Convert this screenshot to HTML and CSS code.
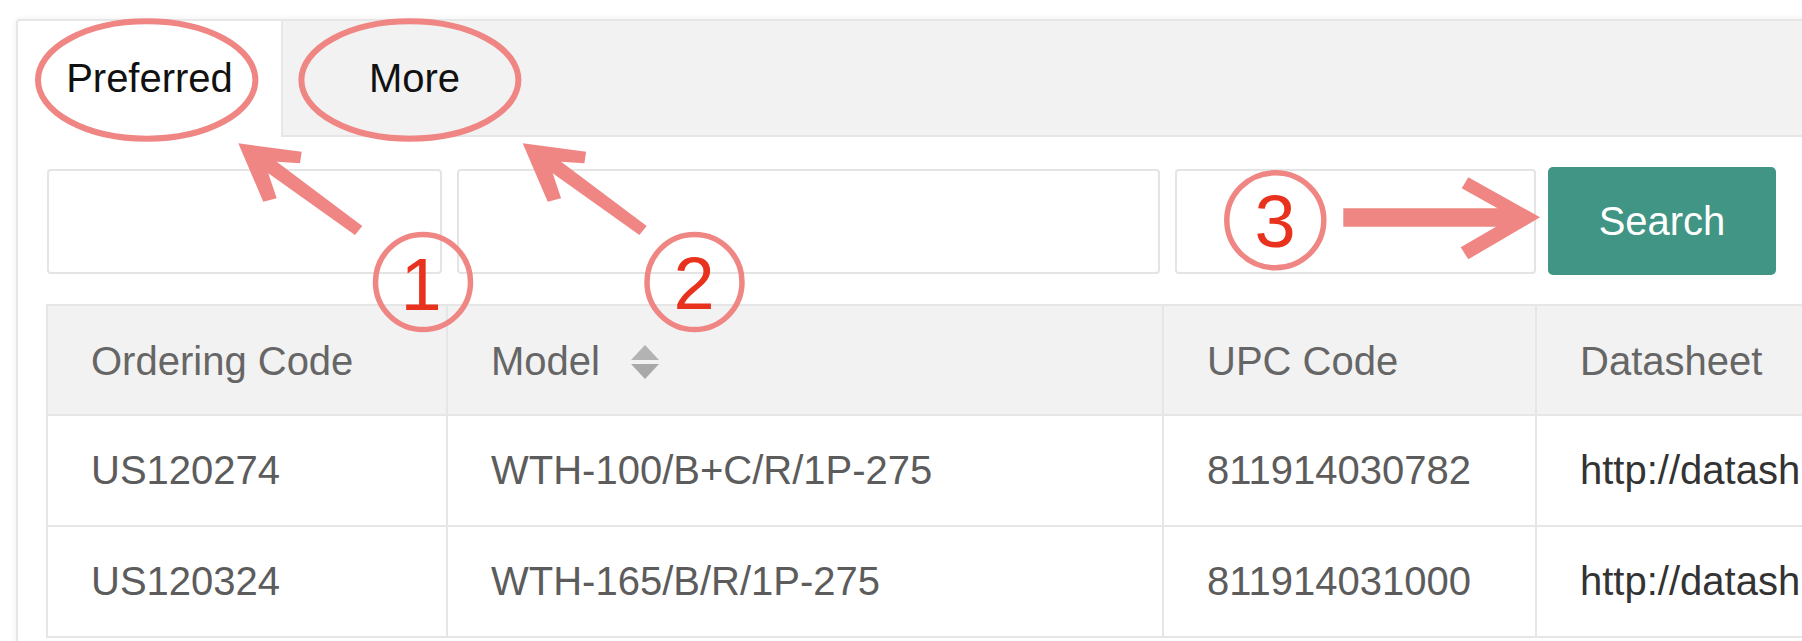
FILE: index.html
```html
<!DOCTYPE html>
<html lang="en">
<head>
<meta charset="utf-8">
<title>Product search</title>
<link rel="stylesheet" href="styles.css">
</head>
<body>
<div class="panel">
  <div class="tabs">
    <div class="tab active">Preferred</div>
    <div class="tab">More</div>
  </div>
  <div class="content">
    <div class="search-row">
      <div class="field f1"></div>
      <div class="field f2"></div>
      <div class="field f3"></div>
      <button class="btn">Search</button>
    </div>
    <table class="grid">
      <thead>
        <tr>
          <th class="c1">Ordering Code</th>
          <th class="c2">Model<svg class="sort" width="28" height="34" viewBox="0 0 28 34"><polygon points="0,15 14,0 28,15" fill="#b3b3b3"/><polygon points="0,19 28,19 14,34" fill="#a9a9a9"/></svg></th>
          <th class="c3">UPC Code</th>
          <th class="c4">Datasheet</th>
        </tr>
      </thead>
      <tbody>
        <tr>
          <td>US120274</td>
          <td>WTH-100/B+C/R/1P-275</td>
          <td>811914030782</td>
          <td class="link">http://datash</td>
        </tr>
        <tr>
          <td>US120324</td>
          <td>WTH-165/B/R/1P-275</td>
          <td>811914031000</td>
          <td class="link">http://datash</td>
        </tr>
      </tbody>
    </table>
  </div>
</div>

<svg class="notes" width="1802" height="641" viewBox="0 0 1802 641">
  <g fill="none" stroke="#ef8683" stroke-width="6">
    <ellipse cx="146.7" cy="80" rx="108.7" ry="58.7"/>
    <ellipse cx="409.9" cy="80" rx="108.5" ry="58.7"/>
  </g>
  <g fill="#ef8683">
    <polygon points="238.3,143.3 301.7,151.7 300,163.3 276.7,161.7 362.3,226 355,235 268.3,173.3 276.7,198.3 263.3,201.7"/>
    <polygon transform="translate(284.4 0)" points="238.3,143.3 301.7,151.7 300,163.3 276.7,161.7 362.3,226 355,235 268.3,173.3 276.7,198.3 263.3,201.7"/>
    <polygon points="1343.3,208.3 1497.5,208.3 1461.7,188.3 1468.3,177.3 1540,217.3 1468.3,259.3 1460.7,247.3 1496,226.7 1343.3,226.7"/>
  </g>
  <g fill="none" stroke="#ef8683" stroke-width="5.5">
    <circle cx="423" cy="282" r="47.5"/>
    <circle cx="694.5" cy="282" r="47.5"/>
    <ellipse cx="1275.3" cy="220.3" rx="48.5" ry="47.5"/>
  </g>
  <g class="num" fill="#e8321e" font-size="74" text-anchor="middle">
    <text x="421" y="309.5">1</text>
    <text x="694" y="309">2</text>
    <text x="1275" y="246.5">3</text>
  </g>
</svg>
</body>
</html>
```

FILE: styles.css
```css
html, body {
  margin: 0;
  padding: 0;
  background: #ffffff;
}

body {
  position: relative;
  width: 1802px;
  height: 641px;
  overflow: hidden;
  font-family: "Liberation Sans", Arial, Helvetica, sans-serif;
}

.panel {
  margin: 19px 0 0 16px;
  width: 1792px;
  height: 700px;
  border: 2px solid #e6e6e6;
  border-radius: 4px;
  box-shadow: 0 0 6px rgba(0, 0, 0, 0.07);
  background: #ffffff;
  box-sizing: border-box;
}

.tabs {
  display: flex;
  height: 114px;
  background: #f2f2f2;
  border-bottom: 2px solid #e6e6e6;
  border-radius: 3px 3px 0 0;
}

.tab {
  width: 263px;
  height: 114px;
  line-height: 114px;
  text-align: center;
  font-size: 40px;
  color: #111111;
}

.tab.active {
  background: #ffffff;
  border-right: 2px solid #e6e6e6;
  height: 116px;
  margin-bottom: -2px;
  border-radius: 3px 0 0 0;
}

.content {
  padding: 30px 29px 0 29px;
}

.search-row {
  display: flex;
  align-items: center;
  height: 108px;
}

.field {
  height: 105px;
  box-sizing: border-box;
  border: 2px solid #e4e4e4;
  border-radius: 4px;
  background: #ffffff;
  margin-right: 15px;
}

.f1 { width: 395px; }
.f2 { width: 703px; }
.f3 { width: 361px; margin-right: 12px; }

.btn {
  width: 228px;
  height: 108px;
  border: none;
  border-radius: 5px;
  background: #419584;
  color: #ffffff;
  font-family: "Liberation Sans", Arial, Helvetica, sans-serif;
  font-size: 40px;
  padding: 0;
}

.grid {
  margin: 29px 0 0 -1px;
  border-collapse: separate;
  border-spacing: 0;
  table-layout: fixed;
  width: 2090px;
  border-top: 2px solid #e6e6e6;
  border-left: 2px solid #e6e6e6;
  font-size: 40px;
}

.grid th,
.grid td {
  box-sizing: border-box;
  border-right: 2px solid #e6e6e6;
  border-bottom: 2px solid #e6e6e6;
  padding: 0 0 0 43px;
  text-align: left;
  white-space: nowrap;
  overflow: hidden;
}

.grid th {
  height: 110px;
  padding-top: 3px;
  background: #f2f2f2;
  font-weight: normal;
  color: #666666;
}

.grid td {
  height: 111px;
  color: #5c5c5c;
}

.grid td.link {
  color: #333333;
}

.c1 { width: 400px; }
.c2 { width: 716px; }
.c3 { width: 373px; }
.c4 { width: 600px; }

.sort {
  margin-left: 31px;
  vertical-align: -4px;
}

.notes {
  position: absolute;
  left: 0;
  top: 0;
  pointer-events: none;
}

.num {
  font-family: "Liberation Sans", Arial, Helvetica, sans-serif;
}
```
